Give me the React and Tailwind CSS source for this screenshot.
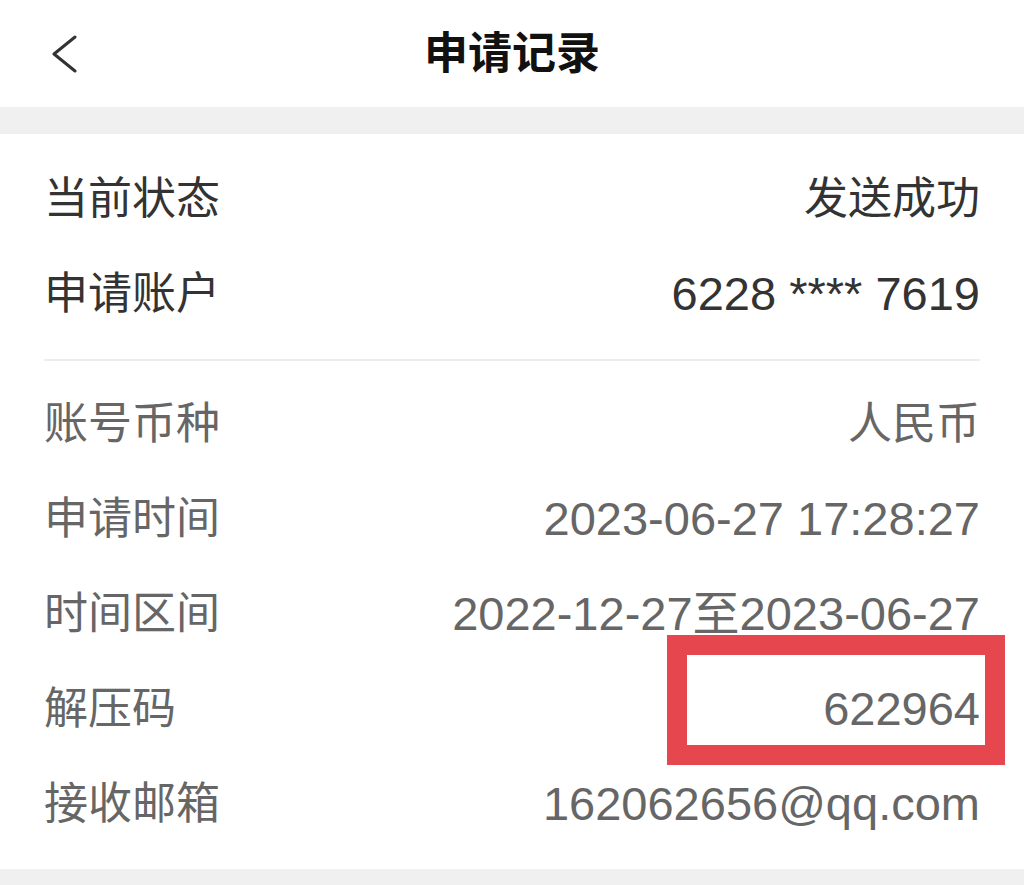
import React from "react";

const topRows = [
  { label: "当前状态", value: "发送成功", cjk: true },
  { label: "申请账户", value: "6228 **** 7619" },
];

const detailRows = [
  { label: "账号币种", value: "人民币", cjk: true },
  { label: "申请时间", value: "2023-06-27 17:28:27" },
  { label: "时间区间", value: "2022-12-27至2023-06-27" },
  { label: "解压码", value: "622964" },
  { label: "接收邮箱", value: "162062656@qq.com" },
];

function Row({ label, value, cjk, dark }) {
  return (
    <div className="flex h-[95px] items-center justify-between">
      <span className="text-[44px] leading-none">{label}</span>
      <span className={`${cjk ? "text-[44px]" : "text-[47px]"} leading-none`}>{value}</span>
    </div>
  );
}

export default function App() {
  return (
    <div className="relative min-h-[885px] w-full bg-[#f0f0f0] font-['Liberation_Sans','Noto_Sans_CJK_SC',sans-serif]">
      {/* nav bar */}
      <header className="grid h-[107px] grid-cols-[1fr_auto_1fr] items-center bg-white">
        <div className="pl-[50px]">
          <svg width="28" height="38" viewBox="0 0 28 38" fill="none">
            <polyline points="25,2 4,19 25,36" stroke="#333" strokeWidth="3" strokeLinecap="round" strokeLinejoin="round" />
          </svg>
        </div>
        <h1 className="text-[44px] font-bold leading-none text-[#111]">申请记录</h1>
        <div />
      </header>

      <div className="mt-[27px] bg-white px-[44px] pb-[18px] pt-[17px]">
        <div className="text-[#333]">
          {topRows.map((r) => (
            <Row key={r.label} {...r} />
          ))}
        </div>
        <div className="mt-[18px] h-[2px] bg-[#ededed]" />
        <div className="mt-[15px] text-[#666]">
          {detailRows.map((r) => (
            <Row key={r.label} {...r} />
          ))}
        </div>
      </div>

      {/* highlight annotation */}
      <div className="absolute left-[667px] top-[635px] h-[130px] w-[338px] border-[20px] border-[#e6464e]" />
    </div>
  );
}
